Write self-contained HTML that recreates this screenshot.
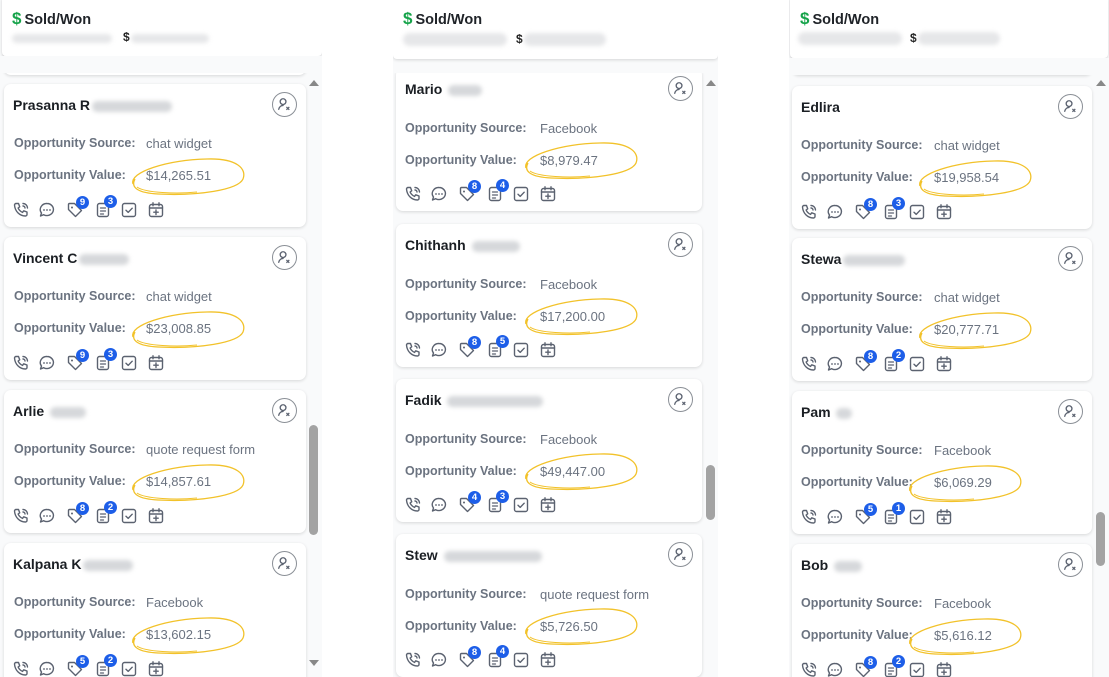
<!DOCTYPE html>
<html><head><meta charset="utf-8">
<style>
*{box-sizing:border-box;margin:0;padding:0}
body{width:1109px;height:677px;background:#fff;position:relative;overflow:hidden;font-family:"Liberation Sans",sans-serif}
.col{position:absolute;overflow:hidden;background:#f9fafb}
.hdr{position:absolute;background:#fff;border-radius:4px;box-shadow:0 1px 3px rgba(0,0,0,.15)}
.hdr .t{position:absolute;left:10px;top:9px;font-size:14.5px;font-weight:bold;color:#1f2328}
.hdr .t b{color:#16a34a;font-size:17px;margin-right:3px}
.blur{position:absolute;background:#e6e7e9;border-radius:8px;filter:blur(2px)}
.card{position:absolute;background:#fff;border-radius:7px;box-shadow:0 1px 3px rgba(0,0,0,.14);height:143px}
.nm{position:absolute;left:9px;top:13px;font-size:14px;font-weight:bold;color:#1b1f24}
.nm i{display:inline-block;vertical-align:middle;height:11px;background:#d6d8db;border-radius:6px;filter:blur(2px);margin-left:2px}
.av{position:absolute;top:8px;right:9px;width:25px;height:25px;border:1.3px solid #8a8f96;border-radius:50%}
.lb{position:absolute;left:10px;font-size:12.5px;font-weight:bold;color:#6b7380}
.vl{position:absolute;font-size:13px;color:#6b7380}
.ic{position:absolute;left:5px;top:116px;height:20px;width:160px}
.bd{position:absolute;width:13px;height:13px;border-radius:50%;background:#1d5ee8;color:#fff;font-size:9.5px;font-weight:bold;text-align:center;line-height:13px}
.el{position:absolute;overflow:visible}
.sb{position:absolute;background:#a3a3a3;border-radius:5px;width:9px}
.ar{position:absolute;width:0;height:0;border-left:5px solid transparent;border-right:5px solid transparent}
</style></head><body>
<svg width="0" height="0" style="position:absolute">
<defs>
<symbol id="ph" viewBox="0 0 20 20"><path d="M5 3.5l2.5 0 1.2 3.3-1.6 1.2c.9 2 2.4 3.5 4.4 4.4l1.2-1.6 3.3 1.2v2.5c0 .8-.7 1.5-1.5 1.5C8.6 16 4 11.4 3.5 5c0-.8.7-1.5 1.5-1.5z M12 3.5a4.5 4.5 0 0 1 4.5 4.5 M12 6a2 2 0 0 1 2 2" fill="none" stroke="#5b6270" stroke-width="1.4" stroke-linecap="round" stroke-linejoin="round"/></symbol>
<symbol id="ch" viewBox="0 0 20 20"><path d="M10 3.5a6.5 6 0 1 1-3.3 11.2L3.5 16l1-3A6.5 6 0 0 1 10 3.5z" fill="none" stroke="#5b6270" stroke-width="1.4" stroke-linejoin="round"/><circle cx="7" cy="10" r=".9" fill="#5b6270"/><circle cx="10" cy="10" r=".9" fill="#5b6270"/><circle cx="13" cy="10" r=".9" fill="#5b6270"/></symbol>
<symbol id="tg" viewBox="0 0 20 20"><path d="M3.5 4.5v5l7 7 6-6-7-7h-5a1 1 0 0 0-1 1z" fill="none" stroke="#5b6270" stroke-width="1.4" stroke-linejoin="round"/><circle cx="7" cy="7.5" r="1" fill="#5b6270"/></symbol>
<symbol id="dc" viewBox="0 0 20 20"><rect x="4.5" y="3.5" width="11" height="13" rx="2" fill="none" stroke="#5b6270" stroke-width="1.4"/><path d="M7.5 8h5M7.5 11h5M7.5 14h3" stroke="#5b6270" stroke-width="1.3" stroke-linecap="round"/></symbol>
<symbol id="ck" viewBox="0 0 20 20"><rect x="3.5" y="3.5" width="13" height="13" rx="2" fill="none" stroke="#5b6270" stroke-width="1.4"/><path d="M7 10.2l2.2 2.2 4-4.2" fill="none" stroke="#5b6270" stroke-width="1.4" stroke-linecap="round" stroke-linejoin="round"/></symbol>
<symbol id="cl" viewBox="0 0 20 20"><rect x="3.5" y="4.5" width="13" height="12" rx="2" fill="none" stroke="#5b6270" stroke-width="1.4"/><path d="M3.5 8h13M7 2.8v3M13 2.8v3M10 10v4.5M7.8 12.2h4.4" stroke="#5b6270" stroke-width="1.4" stroke-linecap="round"/></symbol>
<symbol id="us" viewBox="0 0 24 24"><circle cx="10.5" cy="9" r="3" fill="none" stroke="#5b6270" stroke-width="1.4"/><path d="M6 17c.5-2.5 2.4-4 4.5-4" fill="none" stroke="#5b6270" stroke-width="1.4" stroke-linecap="round"/><path d="M14 14.5l3 3M17 14.5l-3 3" stroke="#5b6270" stroke-width="1.3"/></symbol>
<symbol id="ov" viewBox="0 0 120 44"><path d="M6 30C2 18 40 6 80 5c30-1 40 10 36 20-5 11-45 17-85 15C12 39 3 34 8 25" fill="none" stroke="#f2c22a" stroke-width="1.3"/><path d="M10 33c8 6 40 7 60 5" fill="none" stroke="#f2c22a" stroke-width="1"/></symbol>
</defs></svg>

<!-- COLUMN 1 -->
<div class="col" style="left:0;top:0;width:322px;height:677px">
 <div class="card" style="left:4px;top:-68px;width:302px"></div>
 <div class="card" style="left:4px;top:84px;width:302px">
  <div class="nm">Prasanna R<i style="width:80px"></i></div><svg class="av" viewBox="0 0 24 24"><use href="#us"/></svg>
  <div class="lb" style="top:52px">Opportunity Source:</div><div class="vl" style="left:142px;top:52px">chat widget</div>
  <div class="lb" style="top:84px">Opportunity Value:</div><div class="vl" style="left:142px;top:84px">$14,265.51</div>
  <svg class="el" style="left:123px;top:70px" width="120" height="44"><use href="#ov"/></svg>
  <div class="ic"><svg style="position:absolute;left:2px;top:0" width="20" height="20"><use href="#ph"/></svg><svg style="position:absolute;left:28px;top:0" width="20" height="20"><use href="#ch"/></svg><svg style="position:absolute;left:56px;top:0" width="20" height="20"><use href="#tg"/></svg><svg style="position:absolute;left:84px;top:0" width="20" height="20"><use href="#dc"/></svg><svg style="position:absolute;left:110px;top:0" width="20" height="20"><use href="#ck"/></svg><svg style="position:absolute;left:137px;top:0" width="20" height="20"><use href="#cl"/></svg><div class="bd" style="left:67px;top:-4px">9</div><div class="bd" style="left:95px;top:-5px">3</div></div>
 </div>
 <div class="card" style="left:4px;top:237px;width:302px">
  <div class="nm">Vincent C<i style="width:50px"></i></div><svg class="av" viewBox="0 0 24 24"><use href="#us"/></svg>
  <div class="lb" style="top:52px">Opportunity Source:</div><div class="vl" style="left:142px;top:52px">chat widget</div>
  <div class="lb" style="top:84px">Opportunity Value:</div><div class="vl" style="left:142px;top:84px">$23,008.85</div>
  <svg class="el" style="left:123px;top:70px" width="120" height="44"><use href="#ov"/></svg>
  <div class="ic"><svg style="position:absolute;left:2px;top:0" width="20" height="20"><use href="#ph"/></svg><svg style="position:absolute;left:28px;top:0" width="20" height="20"><use href="#ch"/></svg><svg style="position:absolute;left:56px;top:0" width="20" height="20"><use href="#tg"/></svg><svg style="position:absolute;left:84px;top:0" width="20" height="20"><use href="#dc"/></svg><svg style="position:absolute;left:110px;top:0" width="20" height="20"><use href="#ck"/></svg><svg style="position:absolute;left:137px;top:0" width="20" height="20"><use href="#cl"/></svg><div class="bd" style="left:67px;top:-4px">9</div><div class="bd" style="left:95px;top:-5px">3</div></div>
 </div>
 <div class="card" style="left:4px;top:390px;width:302px">
  <div class="nm">Arlie <i style="width:36px"></i></div><svg class="av" viewBox="0 0 24 24"><use href="#us"/></svg>
  <div class="lb" style="top:52px">Opportunity Source:</div><div class="vl" style="left:142px;top:52px">quote request form</div>
  <div class="lb" style="top:84px">Opportunity Value:</div><div class="vl" style="left:142px;top:84px">$14,857.61</div>
  <svg class="el" style="left:123px;top:70px" width="120" height="44"><use href="#ov"/></svg>
  <div class="ic"><svg style="position:absolute;left:2px;top:0" width="20" height="20"><use href="#ph"/></svg><svg style="position:absolute;left:28px;top:0" width="20" height="20"><use href="#ch"/></svg><svg style="position:absolute;left:56px;top:0" width="20" height="20"><use href="#tg"/></svg><svg style="position:absolute;left:84px;top:0" width="20" height="20"><use href="#dc"/></svg><svg style="position:absolute;left:110px;top:0" width="20" height="20"><use href="#ck"/></svg><svg style="position:absolute;left:137px;top:0" width="20" height="20"><use href="#cl"/></svg><div class="bd" style="left:67px;top:-4px">8</div><div class="bd" style="left:95px;top:-5px">2</div></div>
 </div>
 <div class="card" style="left:4px;top:543px;width:302px">
  <div class="nm">Kalpana K<i style="width:50px"></i></div><svg class="av" viewBox="0 0 24 24"><use href="#us"/></svg>
  <div class="lb" style="top:52px">Opportunity Source:</div><div class="vl" style="left:142px;top:52px">Facebook</div>
  <div class="lb" style="top:84px">Opportunity Value:</div><div class="vl" style="left:142px;top:84px">$13,602.15</div>
  <svg class="el" style="left:123px;top:70px" width="120" height="44"><use href="#ov"/></svg>
  <div class="ic"><svg style="position:absolute;left:2px;top:0" width="20" height="20"><use href="#ph"/></svg><svg style="position:absolute;left:28px;top:0" width="20" height="20"><use href="#ch"/></svg><svg style="position:absolute;left:56px;top:0" width="20" height="20"><use href="#tg"/></svg><svg style="position:absolute;left:84px;top:0" width="20" height="20"><use href="#dc"/></svg><svg style="position:absolute;left:110px;top:0" width="20" height="20"><use href="#ck"/></svg><svg style="position:absolute;left:137px;top:0" width="20" height="20"><use href="#cl"/></svg><div class="bd" style="left:67px;top:-4px">5</div><div class="bd" style="left:95px;top:-5px">2</div></div>
 </div>
 <div class="hdr" style="left:2px;top:-4px;width:320px;height:60px"><div class="t" style="top:13px"><b>$</b>Sold/Won</div>
  <div class="blur" style="left:10px;top:38px;width:100px;height:9px"></div><div style="position:absolute;left:121px;top:34px;font-size:12px;font-weight:bold;color:#222">$</div><div class="blur" style="left:129px;top:38px;width:78px;height:9px"></div></div>
 <div style="position:absolute;left:0;top:56px;width:322px;height:17px;background:#f9fafb"></div>
 <div class="ar" style="left:309px;top:80px;border-bottom:6px solid #888"></div>
 <div class="sb" style="left:309px;top:425px;height:110px"></div>
 <div class="ar" style="left:309px;top:660px;border-top:6px solid #888"></div>
</div>

<!-- COLUMN 2 -->
<div class="col" style="left:393px;top:0;width:325px;height:677px">
 <div class="card" style="left:3px;top:68px;width:306px">
  <div class="nm">Mario <i style="width:34px"></i></div><svg class="av" viewBox="0 0 24 24"><use href="#us"/></svg>
  <div class="lb" style="top:53px;left:9px">Opportunity Source:</div><div class="vl" style="left:144px;top:53px">Facebook</div>
  <div class="lb" style="top:85px;left:9px">Opportunity Value:</div><div class="vl" style="left:144px;top:85px">$8,979.47</div>
  <svg class="el" style="left:124px;top:70px" width="120" height="44"><use href="#ov"/></svg>
  <div class="ic"><svg style="position:absolute;left:2px;top:0" width="20" height="20"><use href="#ph"/></svg><svg style="position:absolute;left:28px;top:0" width="20" height="20"><use href="#ch"/></svg><svg style="position:absolute;left:56px;top:0" width="20" height="20"><use href="#tg"/></svg><svg style="position:absolute;left:84px;top:0" width="20" height="20"><use href="#dc"/></svg><svg style="position:absolute;left:110px;top:0" width="20" height="20"><use href="#ck"/></svg><svg style="position:absolute;left:137px;top:0" width="20" height="20"><use href="#cl"/></svg><div class="bd" style="left:67px;top:-4px">8</div><div class="bd" style="left:95px;top:-5px">4</div></div>
 </div>
 <div class="card" style="left:3px;top:224px;width:306px">
  <div class="nm">Chithanh <i style="width:48px"></i></div><svg class="av" viewBox="0 0 24 24"><use href="#us"/></svg>
  <div class="lb" style="top:53px;left:9px">Opportunity Source:</div><div class="vl" style="left:144px;top:53px">Facebook</div>
  <div class="lb" style="top:85px;left:9px">Opportunity Value:</div><div class="vl" style="left:144px;top:85px">$17,200.00</div>
  <svg class="el" style="left:124px;top:70px" width="120" height="44"><use href="#ov"/></svg>
  <div class="ic"><svg style="position:absolute;left:2px;top:0" width="20" height="20"><use href="#ph"/></svg><svg style="position:absolute;left:28px;top:0" width="20" height="20"><use href="#ch"/></svg><svg style="position:absolute;left:56px;top:0" width="20" height="20"><use href="#tg"/></svg><svg style="position:absolute;left:84px;top:0" width="20" height="20"><use href="#dc"/></svg><svg style="position:absolute;left:110px;top:0" width="20" height="20"><use href="#ck"/></svg><svg style="position:absolute;left:137px;top:0" width="20" height="20"><use href="#cl"/></svg><div class="bd" style="left:67px;top:-4px">8</div><div class="bd" style="left:95px;top:-5px">5</div></div>
 </div>
 <div class="card" style="left:3px;top:379px;width:306px">
  <div class="nm">Fadik <i style="width:96px"></i></div><svg class="av" viewBox="0 0 24 24"><use href="#us"/></svg>
  <div class="lb" style="top:53px;left:9px">Opportunity Source:</div><div class="vl" style="left:144px;top:53px">Facebook</div>
  <div class="lb" style="top:85px;left:9px">Opportunity Value:</div><div class="vl" style="left:144px;top:85px">$49,447.00</div>
  <svg class="el" style="left:124px;top:70px" width="120" height="44"><use href="#ov"/></svg>
  <div class="ic"><svg style="position:absolute;left:2px;top:0" width="20" height="20"><use href="#ph"/></svg><svg style="position:absolute;left:28px;top:0" width="20" height="20"><use href="#ch"/></svg><svg style="position:absolute;left:56px;top:0" width="20" height="20"><use href="#tg"/></svg><svg style="position:absolute;left:84px;top:0" width="20" height="20"><use href="#dc"/></svg><svg style="position:absolute;left:110px;top:0" width="20" height="20"><use href="#ck"/></svg><svg style="position:absolute;left:137px;top:0" width="20" height="20"><use href="#cl"/></svg><div class="bd" style="left:67px;top:-4px">4</div><div class="bd" style="left:95px;top:-5px">3</div></div>
 </div>
 <div class="card" style="left:3px;top:534px;width:306px">
  <div class="nm">Stew <i style="width:98px"></i></div><svg class="av" viewBox="0 0 24 24"><use href="#us"/></svg>
  <div class="lb" style="top:53px;left:9px">Opportunity Source:</div><div class="vl" style="left:144px;top:53px">quote request form</div>
  <div class="lb" style="top:85px;left:9px">Opportunity Value:</div><div class="vl" style="left:144px;top:85px">$5,726.50</div>
  <svg class="el" style="left:124px;top:70px" width="120" height="44"><use href="#ov"/></svg>
  <div class="ic"><svg style="position:absolute;left:2px;top:0" width="20" height="20"><use href="#ph"/></svg><svg style="position:absolute;left:28px;top:0" width="20" height="20"><use href="#ch"/></svg><svg style="position:absolute;left:56px;top:0" width="20" height="20"><use href="#tg"/></svg><svg style="position:absolute;left:84px;top:0" width="20" height="20"><use href="#dc"/></svg><svg style="position:absolute;left:110px;top:0" width="20" height="20"><use href="#ck"/></svg><svg style="position:absolute;left:137px;top:0" width="20" height="20"><use href="#cl"/></svg><div class="bd" style="left:67px;top:-4px">8</div><div class="bd" style="left:95px;top:-5px">4</div></div>
 </div>
 <div style="position:absolute;left:0;top:56px;width:325px;height:17px;background:#f9fafb"></div>
 <div class="hdr" style="left:0;top:-4px;width:325px;height:63px"><div class="t" style="top:13px"><b>$</b>Sold/Won</div>
  <div class="blur" style="left:10px;top:37px;width:104px;height:13px"></div><div style="position:absolute;left:123px;top:36px;font-size:12px;font-weight:bold;color:#222">$</div><div class="blur" style="left:131px;top:37px;width:82px;height:13px"></div></div>
 <div class="ar" style="left:313px;top:80px;border-bottom:6px solid #888"></div>
 <div class="sb" style="left:313px;top:465px;height:55px"></div>
</div>

<!-- COLUMN 3 -->
<div class="col" style="left:789px;top:0;width:320px;height:677px">
 <div class="card" style="left:3px;top:-68px;width:300px"></div>
 <div class="card" style="left:3px;top:86px;width:300px">
  <div class="nm">Edlira</div><svg class="av" viewBox="0 0 24 24"><use href="#us"/></svg>
  <div class="lb" style="top:52px;left:9px">Opportunity Source:</div><div class="vl" style="left:142px;top:52px">chat widget</div>
  <div class="lb" style="top:84px;left:9px">Opportunity Value:</div><div class="vl" style="left:142px;top:84px">$19,958.54</div>
  <svg class="el" style="left:122px;top:70px" width="120" height="44"><use href="#ov"/></svg>
  <div class="ic"><svg style="position:absolute;left:2px;top:0" width="20" height="20"><use href="#ph"/></svg><svg style="position:absolute;left:28px;top:0" width="20" height="20"><use href="#ch"/></svg><svg style="position:absolute;left:56px;top:0" width="20" height="20"><use href="#tg"/></svg><svg style="position:absolute;left:84px;top:0" width="20" height="20"><use href="#dc"/></svg><svg style="position:absolute;left:110px;top:0" width="20" height="20"><use href="#ck"/></svg><svg style="position:absolute;left:137px;top:0" width="20" height="20"><use href="#cl"/></svg><div class="bd" style="left:67px;top:-4px">8</div><div class="bd" style="left:95px;top:-5px">3</div></div>
 </div>
 <div class="card" style="left:3px;top:238px;width:300px">
  <div class="nm">Stewa<i style="width:62px"></i></div><svg class="av" viewBox="0 0 24 24"><use href="#us"/></svg>
  <div class="lb" style="top:52px;left:9px">Opportunity Source:</div><div class="vl" style="left:142px;top:52px">chat widget</div>
  <div class="lb" style="top:84px;left:9px">Opportunity Value:</div><div class="vl" style="left:142px;top:84px">$20,777.71</div>
  <svg class="el" style="left:122px;top:70px" width="120" height="44"><use href="#ov"/></svg>
  <div class="ic"><svg style="position:absolute;left:2px;top:0" width="20" height="20"><use href="#ph"/></svg><svg style="position:absolute;left:28px;top:0" width="20" height="20"><use href="#ch"/></svg><svg style="position:absolute;left:56px;top:0" width="20" height="20"><use href="#tg"/></svg><svg style="position:absolute;left:84px;top:0" width="20" height="20"><use href="#dc"/></svg><svg style="position:absolute;left:110px;top:0" width="20" height="20"><use href="#ck"/></svg><svg style="position:absolute;left:137px;top:0" width="20" height="20"><use href="#cl"/></svg><div class="bd" style="left:67px;top:-4px">8</div><div class="bd" style="left:95px;top:-5px">2</div></div>
 </div>
 <div class="card" style="left:3px;top:391px;width:300px">
  <div class="nm">Pam <i style="width:16px"></i></div><svg class="av" viewBox="0 0 24 24"><use href="#us"/></svg>
  <div class="lb" style="top:52px;left:9px">Opportunity Source:</div><div class="vl" style="left:142px;top:52px">Facebook</div>
  <div class="lb" style="top:84px;left:9px">Opportunity Value:</div><div class="vl" style="left:142px;top:84px">$6,069.29</div>
  <svg class="el" style="left:112px;top:70px" width="120" height="44"><use href="#ov"/></svg>
  <div class="ic"><svg style="position:absolute;left:2px;top:0" width="20" height="20"><use href="#ph"/></svg><svg style="position:absolute;left:28px;top:0" width="20" height="20"><use href="#ch"/></svg><svg style="position:absolute;left:56px;top:0" width="20" height="20"><use href="#tg"/></svg><svg style="position:absolute;left:84px;top:0" width="20" height="20"><use href="#dc"/></svg><svg style="position:absolute;left:110px;top:0" width="20" height="20"><use href="#ck"/></svg><svg style="position:absolute;left:137px;top:0" width="20" height="20"><use href="#cl"/></svg><div class="bd" style="left:67px;top:-4px">5</div><div class="bd" style="left:95px;top:-5px">1</div></div>
 </div>
 <div class="card" style="left:3px;top:544px;width:300px">
  <div class="nm">Bob <i style="width:28px"></i></div><svg class="av" viewBox="0 0 24 24"><use href="#us"/></svg>
  <div class="lb" style="top:52px;left:9px">Opportunity Source:</div><div class="vl" style="left:142px;top:52px">Facebook</div>
  <div class="lb" style="top:84px;left:9px">Opportunity Value:</div><div class="vl" style="left:142px;top:84px">$5,616.12</div>
  <svg class="el" style="left:112px;top:70px" width="120" height="44"><use href="#ov"/></svg>
  <div class="ic"><svg style="position:absolute;left:2px;top:0" width="20" height="20"><use href="#ph"/></svg><svg style="position:absolute;left:28px;top:0" width="20" height="20"><use href="#ch"/></svg><svg style="position:absolute;left:56px;top:0" width="20" height="20"><use href="#tg"/></svg><svg style="position:absolute;left:84px;top:0" width="20" height="20"><use href="#dc"/></svg><svg style="position:absolute;left:110px;top:0" width="20" height="20"><use href="#ck"/></svg><svg style="position:absolute;left:137px;top:0" width="20" height="20"><use href="#cl"/></svg><div class="bd" style="left:67px;top:-4px">8</div><div class="bd" style="left:95px;top:-5px">2</div></div>
 </div>
 <div class="hdr" style="left:1px;top:-4px;width:318px;height:62px"><div class="t" style="top:13px"><b>$</b>Sold/Won</div>
  <div class="blur" style="left:8px;top:36px;width:104px;height:13px"></div><div style="position:absolute;left:120px;top:35px;font-size:12px;font-weight:bold;color:#222">$</div><div class="blur" style="left:128px;top:36px;width:82px;height:13px"></div></div>
 <div style="position:absolute;left:0;top:58px;width:320px;height:17px;background:#f9fafb"></div>
 <div class="ar" style="left:307px;top:80px;border-bottom:6px solid #888"></div>
 <div class="sb" style="left:307px;top:512px;height:54px"></div>
</div>
</body></html>
